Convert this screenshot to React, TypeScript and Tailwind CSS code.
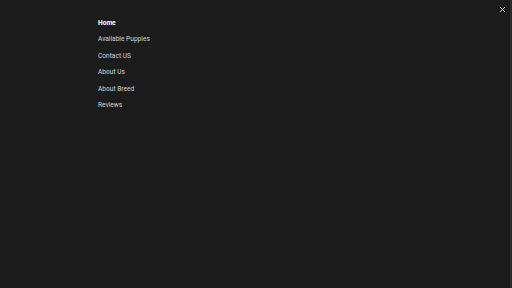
import { X } from 'lucide-react';

const links = ['Home', 'Available Puppies', 'Contact US', 'About Us', 'About Breed', 'Reviews'];

export default function App() {
  return (
    <div className="relative w-[512px] h-[288px] bg-[#1b1b1b] overflow-hidden" style={{ fontFamily: 'Roboto, "Liberation Sans", sans-serif' }}>
      <div className="absolute right-0 top-0 h-full w-[2px] bg-[#2a2a2a]" />
      <button className="absolute right-[5px] top-[5px] text-[#d8d8d8]">
        <X className="w-[9px] h-[9px]" strokeWidth={2.5} />
      </button>
      <nav className="pl-[98px] pt-[19px] flex flex-col gap-[7.4px]">
        {links.map((l, i) => (
          <a key={l} className={`text-[6.6px] leading-[9px] ${i === 0 ? 'font-bold text-white' : 'text-[#d4d4d4]'}`}>
            {l}
          </a>
        ))}
      </nav>
    </div>
  );
}
